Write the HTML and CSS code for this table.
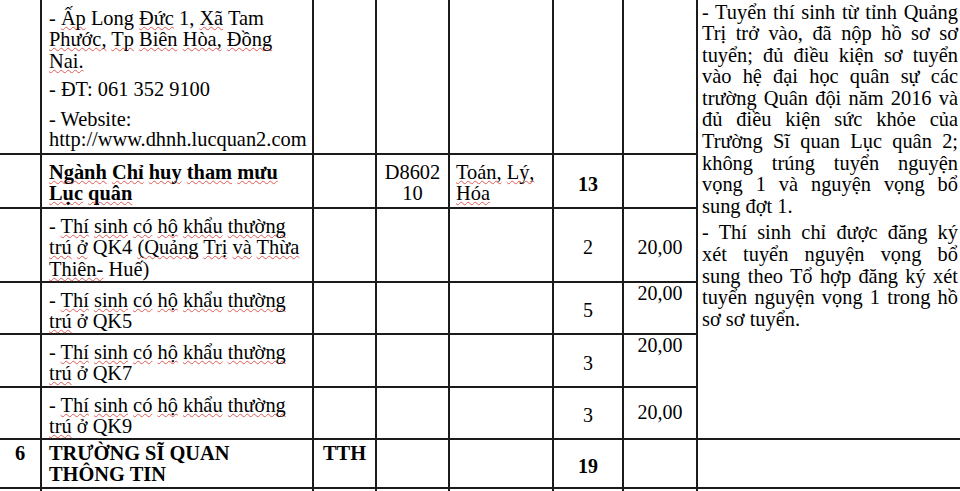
FILE: index.html
```html
<!DOCTYPE html>
<html lang="vi">
<head>
<meta charset="utf-8">
<title>Chỉ tiêu tuyển sinh</title>
<link rel="stylesheet" href="styles.css">
</head>
<body>
<div class="sheet">
<table class="grid">
<colgroup>
<col class="c0"><col class="c1"><col class="c2"><col class="c3"><col class="c4"><col class="c5"><col class="c6"><col class="c7">
</colgroup>
<tbody>
<tr class="r-addr">
<td></td>
<td class="txt addr">
<p>- <span class="sp">Ấp</span> Long <span class="sp">Đức</span> 1, <span class="sp">Xã</span> Tam<br><span class="sp">Phước,</span> <span class="sp">Tp</span> <span class="sp">Biên</span> <span class="sp">Hòa,</span> <span class="sp">Đồng</span><br><span class="sp">Nai.</span></p>
<p class="tel">- ĐT: 061 352 9100</p>
<p class="web">- Website:<br>http://www.dhnh.lucquan2.com</p>
</td>
<td></td>
<td></td>
<td></td>
<td></td>
<td></td>
<td class="note" rowspan="6">
<p><span class="ln">- Tuyển thí sinh từ tỉnh Quảng</span><span class="ln">Trị trở vào, đã nộp hồ sơ sơ</span><span class="ln">tuyển; đủ điều kiện sơ tuyển</span><span class="ln">vào hệ đại học quân sự các</span><span class="ln">trường Quân đội năm 2016 và</span><span class="ln">đủ điều kiện sức khỏe của</span><span class="ln">Trường Sĩ quan Lục quân 2;</span><span class="ln">không trúng tuyển nguyện</span><span class="ln">vọng 1 và nguyện vọng bổ</span><span class="end">sung đợt 1.</span></p>
<p class="next"><span class="ln">- Thí sinh chỉ được đăng ký</span><span class="ln">xét tuyển nguyện vọng bổ</span><span class="ln">sung theo Tổ hợp đăng ký xét</span><span class="ln">tuyển nguyện vọng 1 trong hồ</span><span class="end">sơ sơ tuyển.</span></p>
</td>
</tr>
<tr class="r-major">
<td></td>
<td class="txt"><b><span class="sp">Ngành</span> <span class="sp">Chỉ</span> <span class="sp">huy</span> <span class="sp">tham</span> <span class="sp">mưu</span><br><span class="sp">Lục</span> <span class="sp">quân</span></b></td>
<td></td>
<td class="txt code">D8602<br>10</td>
<td class="txt subj"><span class="sp">Toán,</span> <span class="sp">Lý,</span><br><span class="sp">Hóa</span></td>
<td class="n n-major"><b>13</b></td>
<td></td>
</tr>
<tr class="r-qk4">
<td></td>
<td class="txt">- <span class="sp">Thí</span> <span class="sp">sinh</span> <span class="sp">có</span> <span class="sp">hộ</span> <span class="sp">khẩu</span> <span class="sp">thường</span><br><span class="sp">trú</span> <span class="sp">ở</span> QK4 <span class="sp">(Quảng</span> <span class="sp">Trị</span> <span class="sp">và</span> <span class="sp">Thừa</span><br><span class="sp">Thiên-</span> Huế)</td>
<td></td>
<td></td>
<td></td>
<td class="n">2</td>
<td class="n">20,00</td>
</tr>
<tr class="r-qk5">
<td></td>
<td class="txt">- <span class="sp">Thí</span> <span class="sp">sinh</span> <span class="sp">có</span> <span class="sp">hộ</span> <span class="sp">khẩu</span> <span class="sp">thường</span><br><span class="sp">trú</span> ở QK5</td>
<td></td>
<td></td>
<td></td>
<td class="n">5</td>
<td class="n n-top">20,00</td>
</tr>
<tr class="r-qk7">
<td></td>
<td class="txt">- <span class="sp">Thí</span> <span class="sp">sinh</span> <span class="sp">có</span> <span class="sp">hộ</span> <span class="sp">khẩu</span> <span class="sp">thường</span><br><span class="sp">trú</span> ở QK7</td>
<td></td>
<td></td>
<td></td>
<td class="n">3</td>
<td class="n n-top">20,00</td>
</tr>
<tr class="r-qk9">
<td></td>
<td class="txt">- <span class="sp">Thí</span> <span class="sp">sinh</span> <span class="sp">có</span> <span class="sp">hộ</span> <span class="sp">khẩu</span> <span class="sp">thường</span><br><span class="sp">trú</span> ở QK9</td>
<td></td>
<td></td>
<td></td>
<td class="n">3</td>
<td class="n n-mid">20,00</td>
</tr>
<tr class="r-school">
<td class="txt idx"><b>6</b></td>
<td class="txt"><b>TRƯỜNG SĨ QUAN<br>THÔNG TIN</b></td>
<td class="txt abbr"><b>TTH</b></td>
<td></td>
<td></td>
<td class="n n-school"><b>19</b></td>
<td></td>
<td class="note-empty"></td>
</tr>
<tr class="r-next">
<td></td><td></td><td></td><td></td><td></td><td></td><td></td><td class="note-empty"></td>
</tr>
</tbody>
</table>
</div>
</body>
</html>
```
FILE: styles.css
```css
html, body {
  margin: 0;
  padding: 0;
  background: #ffffff;
  overflow: hidden;
}

.sheet {
  width: 960px;
  height: 491px;
  overflow: hidden;
}

.grid {
  border-collapse: collapse;
  table-layout: fixed;
  width: 967px;
  font-family: "Liberation Serif", "Times New Roman", serif;
  font-size: 20.4px;
  line-height: 21.5px;
  color: #000;
}

.c0 { width: 41px; }
.c1 { width: 272px; }
.c2 { width: 63px; }
.c3 { width: 73px; }
.c4 { width: 104px; }
.c5 { width: 70px; }
.c6 { width: 74px; }
.c7 { width: 270px; }

.grid td {
  border: 2px solid #1b1b1b;
  padding: 7px 3px 0 7px;
  vertical-align: top;
  white-space: nowrap;
}

.grid tr:first-child td {
  border-top: none;
}

.grid tr > td:first-child {
  border-left: none;
}

.grid p {
  margin: 0;
}

/* spelling-check squiggle from the word processor */
.sp {
  text-decoration-line: underline;
  text-decoration-style: wavy;
  text-decoration-color: #e25a55;
  text-decoration-thickness: 1px;
  text-underline-offset: 1px;
  text-decoration-skip-ink: none;
}

.grid td.addr {
  padding-top: 7.5px;
  padding-bottom: 3.5px;
}

.addr .tel {
  margin-top: 6.6px;
}

.addr .web {
  margin-top: 9.2px;
  line-height: 20px;
}

.r-major td.txt {
  padding-bottom: 2px;
}

.r-qk4 td.txt {
  padding-bottom: 0.5px;
}

.r-qk7 td.txt {
  padding-bottom: 1px;
}

.grid td.code {
  text-align: center;
  padding-left: 2px;
  padding-right: 2px;
}

.grid td.subj {
  padding-left: 6px;
}

.grid td.n {
  font-size: 20px;
  text-align: center;
  vertical-align: middle;
  padding: 6px 2px 0 2px;
}

.grid td.n-major {
  padding-top: 8px;
}

.grid td.n-top {
  vertical-align: top;
  padding-top: 0;
}

.grid td.n-mid {
  padding-top: 0;
}

.grid td.note {
  border-right: none;
  white-space: normal;
  line-height: 21.6px;
  padding: 1.5px 9px 0 4px;
}

.note .ln {
  display: block;
  text-align: justify;
  text-align-last: justify;
}

.note .end {
  display: block;
  text-align: left;
}

.note .next {
  margin-top: 5px;
}

.grid td.note-empty {
  border-right: none;
}

.r-school td.txt {
  padding-top: 3px;
  padding-bottom: 1px;
}

.grid td.idx,
.grid td.abbr {
  text-align: center;
  padding-left: 2px;
  padding-right: 2px;
}

.grid td.n-school {
  padding-top: 6px;
}

.r-next td {
  height: 12px;
  padding: 0;
}
```
